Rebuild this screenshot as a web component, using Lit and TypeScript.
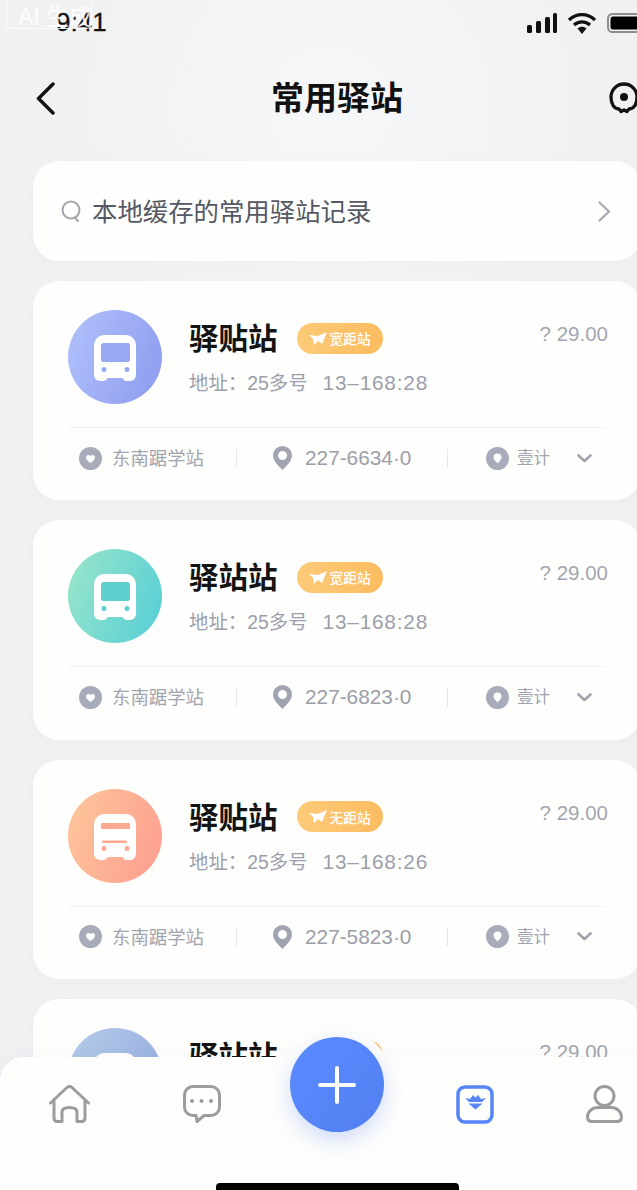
import { LitElement, html, css, svg } from "lit";
import { customElement } from "lit/decorators.js";

type Station = {
  name: string; addr: string; phone: string; from: string; to: string;
  light: string; stripes?: boolean; badge: string; spot: string; spot2: string;
};

const stations: Station[] = [
  { name: "驿贴站", addr: "13–168:28", phone: "227-6634·0", from: "#b2c1fb", to: "#8c9bee", light: "#98a8f2", badge: "宽距站", spot: "东南踞学站", spot2: "壹计" },
  { name: "驿站站", addr: "13–168:28", phone: "227-6823·0", from: "#9ae6ca", to: "#55cdd6", light: "#5fcfcf", badge: "宽距站", spot: "东南踞学站", spot2: "壹计" },
  { name: "驿贴站", addr: "13–168:26", phone: "227-5823·0", from: "#fdc79a", to: "#fe9c90", light: "#fda98f", stripes: true, badge: "无距站", spot: "东南踞学站", spot2: "壹计" },
  { name: "驿站站", addr: "13–168:28", phone: "227-6823·0", from: "#b6cbe9", to: "#93ade0", light: "#a3bbe4", badge: "宽距站", spot: "东南踞学站", spot2: "壹计" },
];

const busBody = "M10 0H32A10 10 0 0 1 42 10V40A6 6 0 0 1 36 46H33A5 5 0 0 1 28.500 43H13.500A5 5 0 0 1 9 46H6A6 6 0 0 1 0 40V10A10 10 0 0 1 10 0Z";

function busIcon(s: Station) {
  return html`<svg class="bus" viewBox="0 0 42 46" width="42" height="46">
    <path d=${busBody} fill="#fff"></path>
    ${s.stripes
      ? svg`<rect x="7" y="9" width="29" height="6" rx="1" fill=${s.light}></rect>
            <rect x="8" y="26.500" width="25" height="2.500" rx="1" fill=${s.light}></rect>`
      : svg`<rect x="7" y="8" width="29" height="19" rx="2.500" fill=${s.light}></rect>`}
    <circle cx="10" cy="34.500" r="2.500" fill=${s.light}></circle>
    <circle cx="33" cy="34.500" r="2.500" fill=${s.light}></circle>
  </svg>`;
}

@customElement("app-root")
export class AppRoot extends LitElement {
  static styles = css`
    :host {
      display: block;
      position: relative;
      width: 637px;
      height: 1190px;
      overflow: hidden;
      background: #f0f1f3;
      font-family: "Noto Sans CJK SC", "Noto Sans", sans-serif;
    }
    .screen { width: 674px; height: 1190px; position: relative; overflow: hidden;
      background: radial-gradient(circle at 330px 110px, #f6f7f8 0, #f0f1f3 260px); }
    .watermark {
      position: absolute; left: 6px; top: -6px; width: 86px; height: 35px;
      border: 1px solid rgba(255,255,255,.8); border-radius: 5px;
      color: rgba(255,255,255,.9); font-size: 23px; line-height: 45px; padding-left: 11px;
      box-sizing: border-box; white-space: nowrap; font-family: "Liberation Sans", "Noto Sans CJK SC", sans-serif;
    }
    .status { height: 45px; display: flex; align-items: center; padding: 0 27px 0 56px; box-sizing: border-box; position: relative; }
    .time { font: 400 26px/1 "Liberation Sans", sans-serif; color: #111; margin-top: -1px; -webkit-text-stroke: .3px #111; }
    .status-icons { margin-left: auto; display: flex; align-items: center; gap: 10px; }
    .nav { height: 106px; position: relative; display: flex; align-items: center; justify-content: space-between; padding: 0 35px 0 36px; box-sizing: border-box; }
    .title { position: absolute; left: 0; right: 0; top: 31px; text-align: center; font-size: 33px; font-weight: 700; color: #111; line-height: 40px; }
    .list { padding: 10px 33px 0; display: flex; flex-direction: column; gap: 20px; }
    .search {
      height: 100px; border-radius: 26px; background: #fefefd; display: flex; align-items: center;
      padding: 0 30px 0 28px; box-sizing: border-box; box-shadow: 0 4px 16px rgba(60,70,90,.025);
    }
    .search-text { margin-left: 11px; font-size: 25.400px; color: #555964; white-space: nowrap; margin-top: -3px; }
    .go-wrap { margin-left: auto; display: flex; }
    .card {
      height: 219.330px; border-radius: 26px; background: #fefefc; box-sizing: border-box;
      padding-top: 29px; flex: none; box-shadow: 0 4px 16px rgba(60,70,90,.025);
    }
    .top { display: flex; padding: 0 33px 0 35px; height: 117px; box-sizing: border-box; }
    .avatar { width: 94px; height: 94px; border-radius: 50%; display: flex; align-items: center; justify-content: center; flex: none; }
    .bus { margin: 2px 1px 0 0; }
    .info { margin-left: 28px; padding-top: 8px; }
    .name-row { display: flex; align-items: center; height: 38px; }
    .name { font-size: 29.500px; font-weight: 600; color: #141414; line-height: 36px; white-space: nowrap; margin: -2px 0 0 -1px; }
    .badge {
      margin-left: 19px; width: 86px; height: 31px; border-radius: 16px; box-sizing: border-box; padding-left: 12px;
      background: linear-gradient(90deg, #fdca78, #fcbc60); display: flex; align-items: center; gap: 3px;
      color: #fff; font-size: 13.700px; font-weight: 500; white-space: nowrap; margin-top: 2px;
    }
    .addr { margin-top: 13px; display: flex; gap: 15px; font: 19.400px/28px "Liberation Sans", "Noto Sans CJK SC", sans-serif; color: #9b9fac; white-space: nowrap; margin-left: -1px; }
    .addr .num { font-size: 20.800px; letter-spacing: .8px; }
    .price { margin-left: auto; margin-top: 12px; font: 20.500px/24px "Liberation Sans", sans-serif; color: #a3a6b2; white-space: nowrap; }
    .foot {
      margin-left: 36px; width: 536px; height: 61px; border-top: 1px solid #f1f2f3; display: flex; align-items: center;
      padding-left: 10px; box-sizing: border-box; color: #a1a4b0; white-space: nowrap;
    }
    .f-spot { font-size: 18.400px; margin: -2px 0 0 10px; width: 92px; }
    .sep { width: 1px; height: 19px; background: #e6e7ea; flex: none; }
    .s1 { margin: 0 36px 0 32px; }
    .s2 { margin: 0 38px 0 36px; }
    .f-phone { font: 20.800px/24px "Liberation Sans", sans-serif; margin-left: 13px; width: 106px; color: #9b9eaa; }
    .f-two { font-size: 16.500px; margin: -2px 0 0 8px; width: 33px; }
    .chev { margin-left: 27px; }
    .tabbar {
      position: absolute; left: 0; right: 0; top: 1057px; height: 133px; background: #fefefc; border-radius: 24px 24px 0 0;
      box-shadow: 0 -4px 16px rgba(60,70,90,.03); display: flex; align-items: flex-start; padding: 28px 0 0 49px; box-sizing: border-box;
    }
    .halo { position: absolute; left: 281px; top: -29px; width: 112px; height: 112px; border-radius: 50%; background: #fefefc; }
    .fab {
      position: absolute; left: 290px; top: -20px; width: 94px; height: 95px; border-radius: 50%;
      background: linear-gradient(135deg, #5a8cff, #527ff2); box-shadow: 0 8px 22px rgba(85,125,245,.28);
      display: flex; align-items: center; justify-content: center;
    }
    .t-chat { margin-left: 93px; }
    .t-active { margin-left: 235px; }
    .t-user { margin-left: 92px; }
    .indicator { position: absolute; left: 216px; bottom: 0; width: 243px; height: 7px; background: #000; border-radius: 4px 4px 0 0; }
  `;

  private card(s: Station) {
    return html`<div class="card">
      <div class="top">
        <div class="avatar" style="background:linear-gradient(110deg,${s.from},${s.to})">${busIcon(s)}</div>
        <div class="info">
          <div class="name-row">
            <span class="name">${s.name}</span>
            <span class="badge">
              <svg width="18" height="13" viewBox="0 0 18 13"><path d="M0 3L9 4L18 0L13 12L9 9L5 13L4 7Z" fill="#fff"></path></svg>
              ${s.badge}
            </span>
          </div>
          <div class="addr"><span>地址：25多号</span><span class="num">${s.addr}</span></div>
        </div>
        <div class="price">? 29.00</div>
      </div>
      <div class="foot">
        <svg width="23" height="23" viewBox="0 0 23 23"><circle cx="11.500" cy="11.500" r="11.500" fill="#a8abb9"></circle>
          <path d="M11.500 16C8.500 14 7 12.300 7 10.500C7 9 8.100 8 9.400 8C10.300 8 11 8.500 11.500 9.300C12 8.500 12.700 8 13.600 8C14.900 8 16 9 16 10.500C16 12.300 14.500 14 11.500 16Z" fill="#fff"></path></svg>
        <span class="f-spot">${s.spot}</span>
        <span class="sep s1"></span>
        <svg width="19" height="24" viewBox="0 0 19 24"><path fill-rule="evenodd" d="M9.500 0A9.500 9.500 0 0 1 19 9.500C19 15 13 20.500 9.500 24C6 20.500 0 15 0 9.500A9.500 9.500 0 0 1 9.500 0ZM9.500 5A4.500 4.500 0 1 0 9.500 14A4.500 4.500 0 1 0 9.500 5Z" fill="#a0a3b1"></path></svg>
        <span class="f-phone">${s.phone}</span>
        <span class="sep s2"></span>
        <svg width="23" height="23" viewBox="0 0 23 23"><circle cx="11.500" cy="11.500" r="11.500" fill="#a8abb9"></circle>
          <path d="M11.500 16.500C10 14.700 7.500 12.700 7.500 10.500A4 4 0 0 1 15.500 10.500C15.500 12.700 13 14.700 11.500 16.500Z" fill="#fff"></path></svg>
        <span class="f-two">${s.spot2}</span>
        <svg class="chev" width="15" height="9" viewBox="0 0 15 9"><path d="M1.500 1.500L7.500 7L13.500 1.500" fill="none" stroke="#a0a3ae" stroke-width="2.600" stroke-linecap="round" stroke-linejoin="round"></path></svg>
      </div>
    </div>`;
  }

  render() {
    return html`<div class="screen">
      <div class="status">
        <span class="time">9:41</span>
        <div class="status-icons">
          <svg width="30" height="20" viewBox="0 0 30 20"><g fill="#111">
            <rect x="0" y="12" width="5" height="8" rx="1.500"></rect><rect x="9" y="8" width="5" height="12" rx="1.500"></rect>
            <rect x="18" y="4" width="5" height="16" rx="1.500"></rect><rect x="26" y="0" width="4" height="20" rx="1.500"></rect></g></svg>
          <svg width="30" height="22" viewBox="0 0 30 22"><g fill="none" stroke="#111" stroke-width="3.200">
            <path d="M2 8C9.500 .7 20.500 .7 28 8"></path><path d="M7 13C11.500 8.700 18.500 8.700 23 13"></path></g>
            <path d="M10.500 16.500C13 14.300 17 14.300 19.500 16.500L15 22Z" fill="#111"></path></svg>
          <svg width="40" height="20" viewBox="0 0 40 20"><rect x="1" y="1" width="38" height="18" rx="4.500" fill="none" stroke="#8d8e90" stroke-width="2"></rect>
            <rect x="3.500" y="3.500" width="33" height="13" rx="2.500" fill="#000"></rect></svg>
        </div>
      </div>
      <div class="watermark">AI 生成</div>
      <div class="nav">
        <svg width="19" height="33" viewBox="0 0 19 33"><path d="M17 2L2.500 16.500L17 31" fill="none" stroke="#111" stroke-width="3.400" stroke-linecap="round" stroke-linejoin="round"></path></svg>
        <div class="title">常用驿站</div>
        <svg width="30" height="32" viewBox="0 0 30 32"><path d="M15 2A13 13 0 0 1 28 15C28 22 25 27 20 27L18 29.500L15 28L12 29.500L10 27C5 27 2 22 2 15A13 13 0 0 1 15 2Z" fill="none" stroke="#111" stroke-width="3.300" stroke-linejoin="round"></path><circle cx="15" cy="15" r="4" fill="#111"></circle></svg>
      </div>
      <div class="list">
        <div class="search">
          <svg width="20" height="22" viewBox="0 0 20 22"><circle cx="10" cy="10" r="8.500" fill="none" stroke="#a3a6ae" stroke-width="2"></circle><path d="M14 17.500L17 21" stroke="#a3a6ae" stroke-width="2" stroke-linecap="round"></path></svg>
          <span class="search-text">本地缓存的常用驿站记录</span>
          <div class="go-wrap"><svg width="13" height="21" viewBox="0 0 13 21"><path d="M1.500 1.500L11 10.500L1.500 19.500" fill="none" stroke="#a6a9b1" stroke-width="2.200" stroke-linecap="round" stroke-linejoin="round"></path></svg></div>
        </div>
        ${stations.map((s) => this.card(s))}
      </div>
      <div class="tabbar">
        <div class="halo"></div>
        <div class="fab"><svg width="38" height="38" viewBox="0 0 38 38"><path d="M19 2V36M2 19H36" stroke="#fff" stroke-width="4" stroke-linecap="round"></path></svg></div>
        <svg width="41" height="38" viewBox="0 0 41 38"><path d="M1.500 18L18 2.500Q20.500 .5 23 2.500L39.500 18M5 16V33Q5 36.500 8.500 36.500H13V27Q13 22.500 20.500 22.500Q28 22.500 28 27V36.500H32.500Q36 36.500 36 33V16" fill="none" stroke="#9c9c9e" stroke-width="3" stroke-linecap="round" stroke-linejoin="round"></path></svg>
        <svg class="t-chat" width="38" height="38" viewBox="0 0 38 38"><path d="M10 1.500H28A8.500 8.500 0 0 1 36.500 10V22A8.500 8.500 0 0 1 28 30.500H21L14 36.500L13 30.500H10A8.500 8.500 0 0 1 1.500 22V10A8.500 8.500 0 0 1 10 1.500Z" fill="none" stroke="#9c9c9e" stroke-width="3" stroke-linejoin="round"></path><g fill="#9c9c9e"><circle cx="9" cy="16" r="2"></circle><circle cx="18.500" cy="16" r="2"></circle><circle cx="28" cy="16" r="2"></circle></g></svg>
        <svg class="t-active" width="38" height="39" viewBox="0 0 38 39"><rect x="2" y="2" width="34" height="35" rx="7" fill="none" stroke="#5585f6" stroke-width="3.500"></rect><path d="M9 13L14 14L17 10L19.500 12.500L22 10L25 14L30 13L26 17H13ZM12.500 18.500H26.500L19.500 24.500Z" fill="#5585f6"></path></svg>
        <svg class="t-user" width="37" height="38" viewBox="0 0 37 38"><circle cx="18.500" cy="11" r="9.500" fill="none" stroke="#9c9c9e" stroke-width="3"></circle><path d="M12 22.500H25C31 22.500 35.500 27 35.500 32Q35.500 36.500 31 36.500H6Q1.500 36.500 1.500 32C1.500 27 6 22.500 12 22.500Z" fill="none" stroke="#9c9c9e" stroke-width="3"></path></svg>
        <div class="indicator"></div>
      </div>
    </div>`;
  }
}
